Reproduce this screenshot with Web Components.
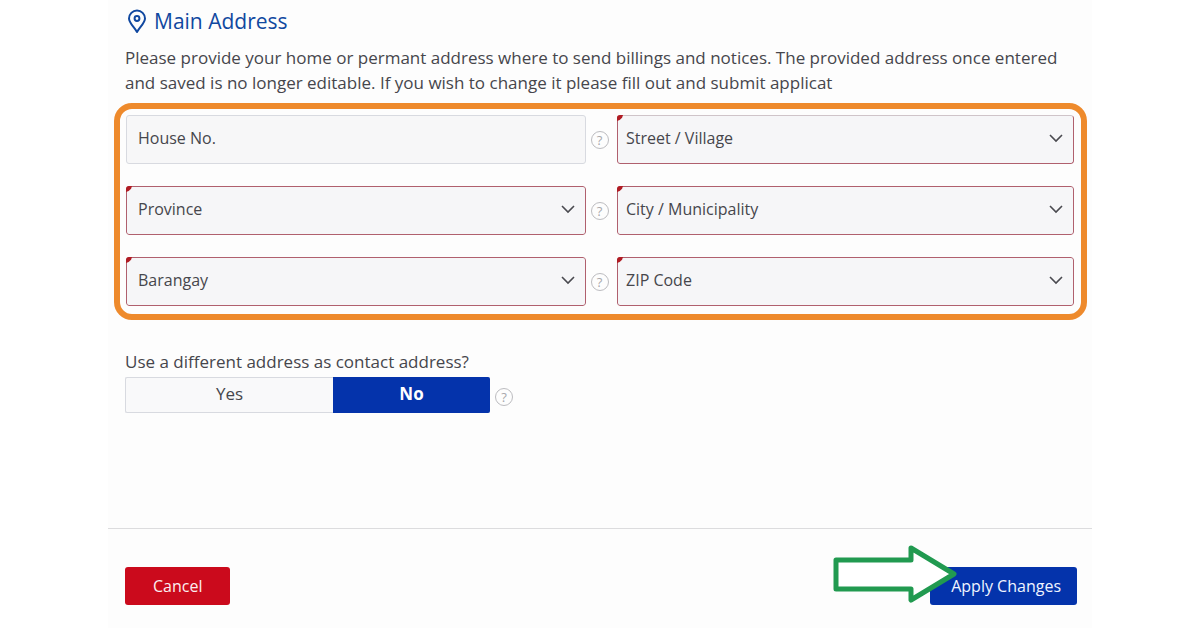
<!DOCTYPE html>
<html lang="en">
<head>
<meta charset="utf-8">
<meta name="viewport" content="width=device-width, initial-scale=1">
<title>Main Address</title>
<style>
  body {
    margin: 0;
    background: #fff;
    color: #46464c;
    font-family: "Open Sans", "Noto Sans", sans-serif;
    font-size: 17px;
    line-height: 25px;
  }
</style>
</head>
<body>
<address-page>
  <section-title slot="title">Main Address</section-title>
  <p slot="intro">Please provide your home or permant address where to send billings and notices. The provided address once entered and saved is no longer editable. If you wish to change it please fill out and submit applicat</p>
  <field-grid slot="fields">
    <text-field label="House No."></text-field>
    <help-tip></help-tip>
    <select-field label="Street / Village" class="soft"></select-field>
    <select-field label="Province"></select-field>
    <help-tip></help-tip>
    <select-field label="City / Municipality"></select-field>
    <select-field label="Barangay"></select-field>
    <help-tip></help-tip>
    <select-field label="ZIP Code"></select-field>
  </field-grid>
  <yes-no slot="choice">Use a different address as contact address?</yes-no>
  <action-button slot="actions" class="cancel">Cancel</action-button>
  <action-button slot="actions" class="apply">Apply Changes<arrow-pointer slot="pointer"></arrow-pointer></action-button>
</address-page>

<script>
// Attach an open shadow root and fill it
function render(el, html) {
  const root = el.attachShadow({ mode: 'open' });
  root.innerHTML = html;
  return root;
}

class AddressPage extends HTMLElement {
  constructor() {
    super();
    render(this, `
      <style>
        :host {
          display: block;
          box-sizing: border-box;
          width: 82%;
          min-height: 100vh;
          margin: 0 auto;
          background: #fdfdfd;
        }
        main { padding: 9px 5px 0 6px; }
        header, .choice { padding: 0 11px; }
        ::slotted(p) { margin: 11px 0 0; }
        .fields { margin-top: 8px; }
        .choice { margin-top: 29px; }
        footer {
          display: flex;
          justify-content: space-between;
          margin-top: 115px;
          padding: 38px 15px 23px 17px;
          border-top: 1px solid #dcdcde;
        }
      </style>
      <main>
        <header>
          <slot name="title"></slot>
          <slot name="intro"></slot>
        </header>
        <div class="fields"><slot name="fields"></slot></div>
        <div class="choice"><slot name="choice"></slot></div>
      </main>
      <footer><slot name="actions"></slot></footer>`);
  }
}

class SectionTitle extends HTMLElement {
  constructor() {
    super();
    render(this, `
      <style>
        :host { display: block; color: #1048a0; }
        h1 {
          display: flex;
          align-items: center;
          gap: 5px;
          margin: 0;
          font-size: 21px;
          font-weight: 400;
          line-height: 25px;
        }
        svg { width: 24px; height: 25px; }
      </style>
      <h1>
        <svg viewBox="0 0 24 25" fill="none" stroke="currentColor" stroke-width="2" aria-hidden="true">
          <path d="M12 23C9.500 18.500 4 14 4 9.500a8 8 0 0 1 16 0C20 14 14.500 18.500 12 23z" stroke-linejoin="round"/>
          <circle cx="12" cy="9.500" r="2.400"/>
        </svg>
        <slot></slot>
      </h1>`);
  }
}

class FieldGrid extends HTMLElement {
  constructor() {
    super();
    render(this, `
      <style>
        :host {
          display: grid;
          grid-template-columns: calc(50% - 14px) 31px 1fr;
          row-gap: 22px;
          align-items: center;
          padding: 6px 7px 8px 6px;
          border: 6px solid #ee8a2c;
          border-radius: 18px;
          font-size: 16px;
        }
        ::slotted(help-tip) { padding-right: 4px; }
      </style>
      <slot></slot>`);
  }
}

class TextField extends HTMLElement {
  constructor() {
    super();
    render(this, `
      <style>
        :host { display: block; }
        input {
          display: block;
          box-sizing: border-box;
          width: 100%;
          height: 49px;
          margin: 0;
          padding: 0 11px 3px;
          border: 1px solid #d8dae0;
          border-radius: 3px;
          background: #f7f7f8;
          color: inherit;
          font: inherit;
        }
        input::placeholder { color: inherit; opacity: 1; }
      </style>
      <input type="text">`);
  }

  connectedCallback() {
    const input = this.shadowRoot.querySelector('input');
    input.placeholder = this.getAttribute('label');
    input.setAttribute('aria-label', this.getAttribute('label'));
  }
}

class SelectField extends HTMLElement {
  constructor() {
    super();
    render(this, `
      <style>
        :host {
          display: grid;
          align-items: center;
          overflow: hidden;
          border-radius: 3px;
          --top: #b0606e;
        }
        :host(.soft) { --top: #cfc4c9; }
        select, svg, i { grid-area: 1 / 1; }
        select {
          appearance: none;
          box-sizing: border-box;
          width: 100%;
          height: 49px;
          margin: 0;
          padding: 0 40px 3px 8px;
          border: 1px solid #b0606e;
          border-top-color: var(--top);
          border-radius: 3px;
          background: #f6f6f8;
          color: inherit;
          font: inherit;
        }
        :host(:nth-child(3n + 1)) select { padding-left: 11px; }
        svg {
          justify-self: end;
          width: 14px;
          height: 10px;
          margin: 0 11px 3px 0;
          pointer-events: none;
        }
        /* required marker in the corner */
        i {
          align-self: start;
          width: 6px;
          height: 6px;
          background: #b01c24;
          clip-path: polygon(0 0, 100% 0, 85% 45%, 45% 85%, 0 100%);
          pointer-events: none;
        }
      </style>
      <select required><option value=""></option></select>
      <svg viewBox="0 0 14 10" fill="none" stroke="#4a4a50" stroke-width="1.600" aria-hidden="true">
        <path d="M1 2l6 6 6-6"/>
      </svg>
      <i></i>`);
  }

  connectedCallback() {
    const label = this.getAttribute('label');
    this.shadowRoot.querySelector('option').textContent = label;
    this.shadowRoot.querySelector('select').setAttribute('aria-label', label);
  }
}

class HelpTip extends HTMLElement {
  constructor() {
    super();
    render(this, `
      <style>
        :host { display: flex; justify-content: center; }
        button {
          width: 18px;
          height: 18px;
          margin: 0;
          padding: 0;
          border: 1px solid #bcbcc0;
          border-radius: 50%;
          background: none;
          color: #a8a8ac;
          font: inherit;
          font-size: 13px;
          line-height: 16px;
        }
      </style>
      <button type="button" aria-label="Help">?</button>`);
  }
}

class YesNo extends HTMLElement {
  constructor() {
    super();
    render(this, `
      <style>
        :host { display: block; }
        fieldset { margin: 0; padding: 0; border: 0; }
        legend { padding: 0; }
        .row { display: flex; align-items: center; gap: 5px; margin-top: 3px; }
        .options {
          display: flex;
          box-sizing: border-box;
          width: 365px;
          height: 36px;
          border: 1px solid #d8dae0;
          border-right: 0;
          border-radius: 2px;
          background: #f9f9fa;
        }
        label {
          flex: 1;
          margin: -1px 0;
          padding-bottom: 1px;
          line-height: 34px;
          text-align: center;
        }
        label + label { flex: 0 0 157px; border-radius: 0 2px 2px 0; }
        label:has(:checked) { background: #0433ab; color: #fff; font-weight: 700; }
        input {
          position: absolute;
          opacity: 0;
          pointer-events: none;
        }
        help-tip { margin-top: 3px; }
      </style>
      <fieldset>
        <legend><slot></slot></legend>
        <div class="row">
          <div class="options">
            <label><input type="radio" name="different" value="yes">Yes</label>
            <label><input type="radio" name="different" value="no" checked>No</label>
          </div>
          <help-tip></help-tip>
        </div>
      </fieldset>`);
  }
}

class ActionButton extends HTMLElement {
  constructor() {
    super();
    render(this, `
      <style>
        :host { display: block; position: relative; font-size: 16px; }
        button {
          display: block;
          height: 38px;
          margin: 0;
          padding: 0 28px;
          border: 0;
          border-radius: 3px;
          background: #cb0a1c;
          color: #fbeef0;
          font: inherit;
        }
        :host(.apply) button { padding: 0 16px 0 21px; background: #0433ab; color: #f0f4ff; }
      </style>
      <button type="button"><slot></slot></button>
      <slot name="pointer"></slot>`);
  }
}

class ArrowPointer extends HTMLElement {
  constructor() {
    super();
    render(this, `
      <style>
        /* lies over the left corner of the button */
        :host {
          display: block;
          position: absolute;
          top: -22px;
          right: 120px;
          pointer-events: none;
        }
        svg { display: block; width: 125px; height: 58px; }
      </style>
      <svg viewBox="0 0 125 58" fill="#fff" stroke="#219a50" stroke-width="5" stroke-linejoin="round" aria-hidden="true">
        <path d="M4 15H79V3L122 29L79 55V44H4z"/>
      </svg>`);
  }
}

customElements.define('address-page', AddressPage);
customElements.define('section-title', SectionTitle);
customElements.define('field-grid', FieldGrid);
customElements.define('text-field', TextField);
customElements.define('select-field', SelectField);
customElements.define('help-tip', HelpTip);
customElements.define('yes-no', YesNo);
customElements.define('action-button', ActionButton);
customElements.define('arrow-pointer', ArrowPointer);
</script>
</body>
</html>
